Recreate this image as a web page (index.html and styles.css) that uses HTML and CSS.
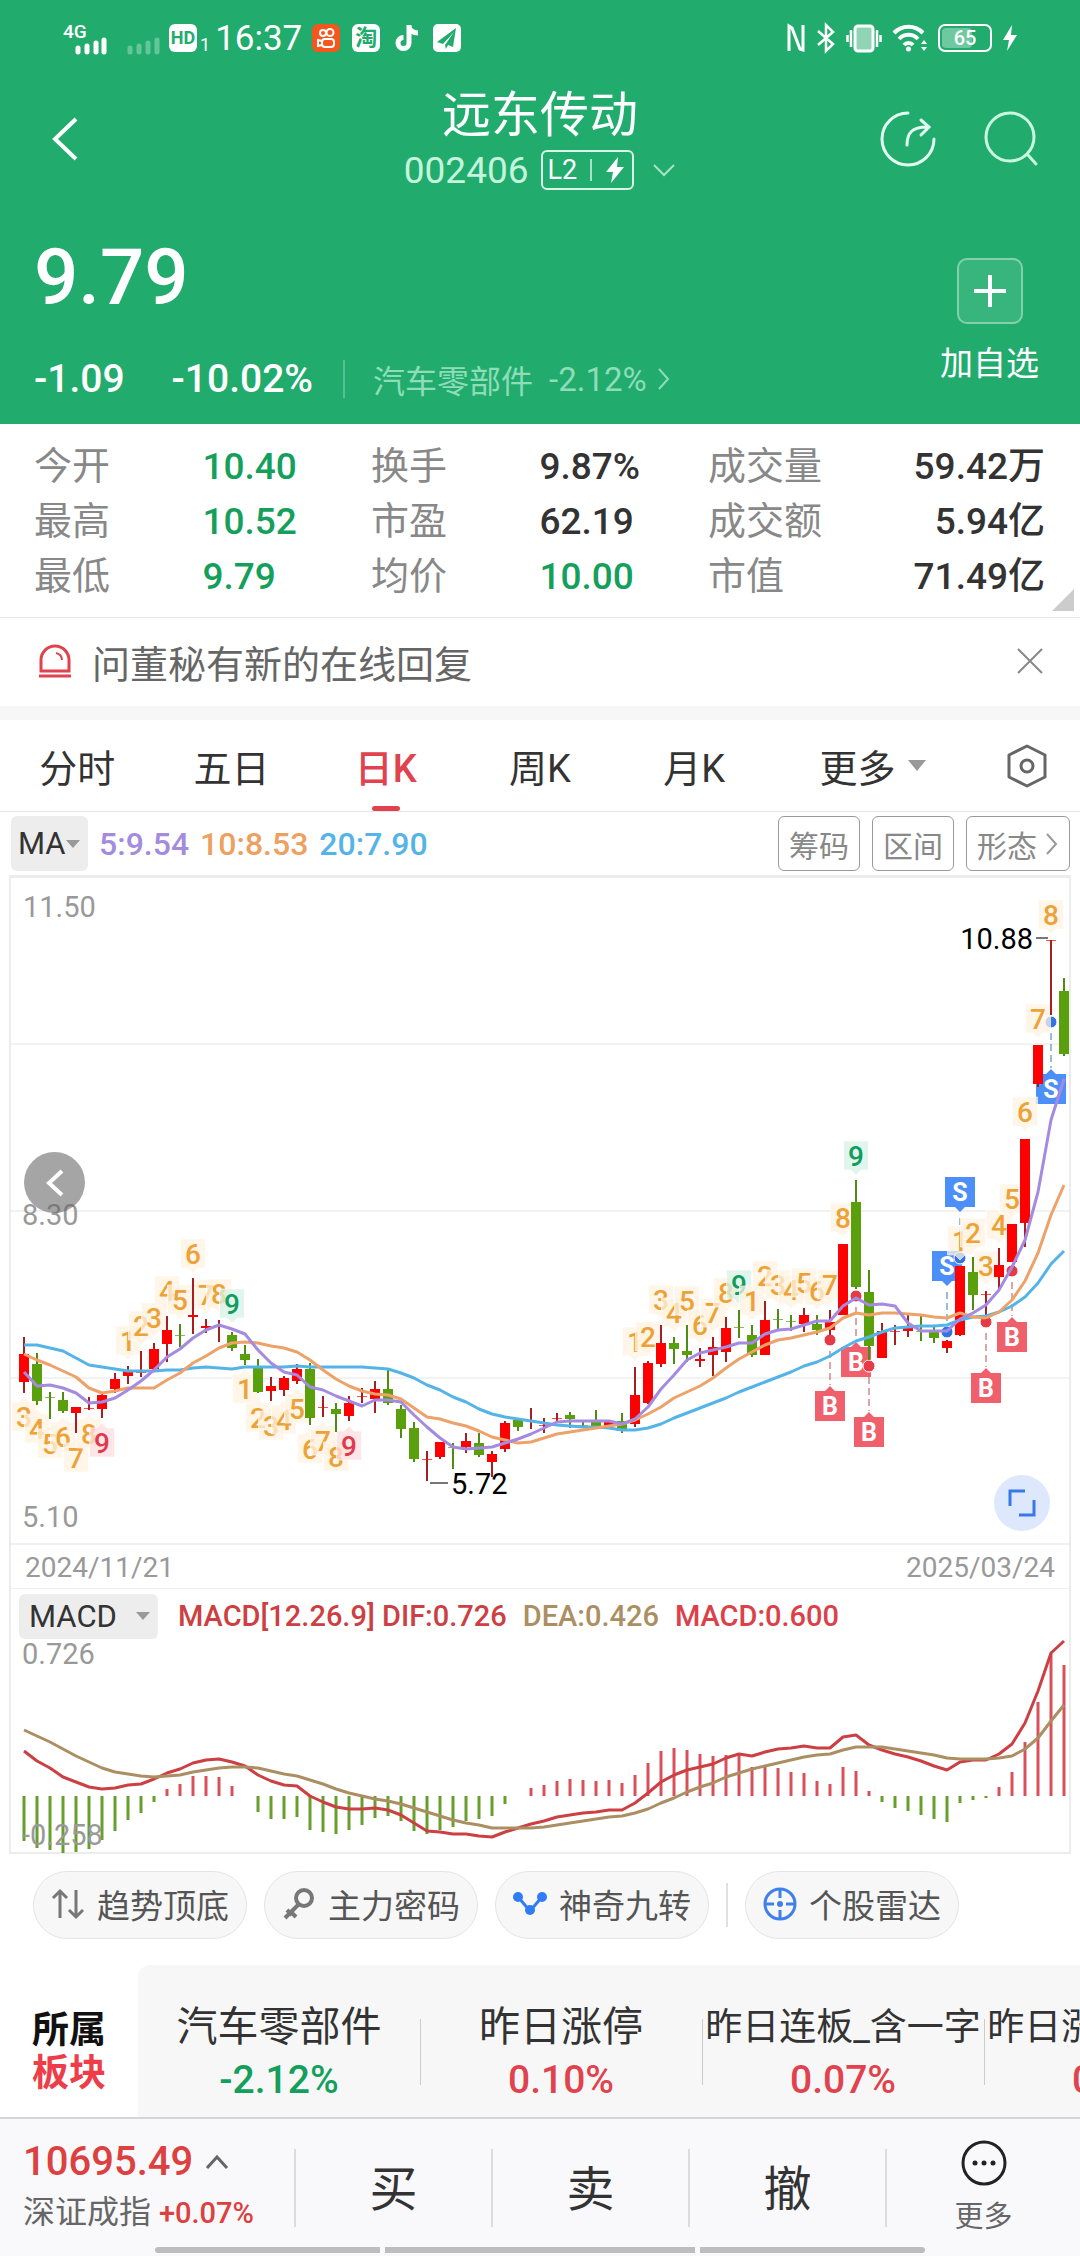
FILE: index.html
```html
<!DOCTYPE html>
<html lang="zh-CN">
<head>
    <meta charset="UTF-8">
    <meta name="viewport" content="width=device-width, initial-scale=1.0">
    <title>远东传动 002406</title>
    <link rel="stylesheet" href="styles.css">
</head>
<body>
    <header class="header">
        <div class="status-bar">
            <div class="status-left">
                <span class="net">4G</span>
                <svg class="signal" width="32" height="32" viewBox="0 0 32 32">
                    <path d="M3 30v-4M12 30v-6M21 30v-9M29 30V18" stroke="#fff" stroke-width="5" stroke-linecap="round"/>
                </svg>
                <svg class="signal-off" width="34" height="32" viewBox="0 0 34 32">
                    <path d="M3 30v-4M12 30v-6M21 30v-9M30 30V18" stroke="#fff" stroke-width="5" stroke-linecap="round"/>
                </svg>
                <span class="hd">HD</span><span class="sim">1</span>
                <span class="time">16:37</span>
                <svg class="app" width="28" height="28" viewBox="0 0 28 28">
                    <rect width="28" height="28" rx="6" fill="#f4561e"/>
                    <g fill="none" stroke="#fff" stroke-width="2"><circle cx="11" cy="9" r="3"/><circle cx="18" cy="8.500" r="3.500"/><rect x="10" y="15" width="12" height="8" rx="3"/><path d="M10 17l-4-1v6l4-1"/></g>
                </svg>
                <span class="tao">淘</span>
                <svg class="app" width="26" height="30" viewBox="0 0 26 30">
                    <path d="M14 2v18a5.500 5.500 0 1 1-5.500-5.500M14 3c0 4 4 7 9 7" fill="none" stroke="#fff" stroke-width="5"/>
                </svg>
                <svg class="app" width="28" height="28" viewBox="0 0 28 28">
                    <rect width="28" height="28" rx="5" fill="#fff"/>
                    <path d="M23 4L4 18l6 2L21 8 12 21l1 4 2-4 5 2z" fill="#21ac6e"/>
                </svg>
            </div>
            <div class="status-right">
                <svg width="20" height="30" viewBox="0 0 20 30"><path d="M3 28V3l3 2 8 21 3 1V2" fill="none" stroke="#fff" stroke-width="3"/></svg>
                <svg width="20" height="30" viewBox="0 0 20 30"><path d="M2 8l15 13-7 7V2l7 7L2 22" fill="none" stroke="#fff" stroke-width="2.500"/></svg>
                <svg width="36" height="30" viewBox="0 0 36 30">
                    <rect x="9" y="3" width="18" height="25" rx="3" fill="#8fd5b5" stroke="#fff" stroke-width="3"/>
                    <path d="M5 7v17M1.500 12v7M31 7v17M34.500 12v7" stroke="#fff" stroke-width="2.500"/>
                </svg>
                <svg width="36" height="30" viewBox="0 0 36 30">
                    <g fill="none" stroke="#fff" stroke-width="4"><path d="M2 10a20 20 0 0 1 29 0"/><path d="M7 16a13 13 0 0 1 19 0"/><path d="M12 22a6 6 0 0 1 9 0"/></g>
                    <circle cx="16.500" cy="26" r="2.500" fill="#fff"/><path d="M29 21l3-4 3 4zM29 24l3 4 3-4z" fill="#fff"/>
                </svg>
                <span class="battery"><span class="battery-level"></span><span class="battery-text">65</span></span>
                <svg width="16" height="28" viewBox="0 0 16 28"><path d="M10 1L1 16h6l-2 11L15 11H9z" fill="#fff"/></svg>
            </div>
        </div>

        <nav class="nav">
            <button class="icon-btn back" aria-label="返回">
                <svg width="28" height="46" viewBox="0 0 28 46"><path d="M25 3L4 23l21 20" fill="none" stroke="#fff" stroke-width="4"/></svg>
            </button>
            <div class="title">
                <h1>远东传动</h1>
                <div class="code-row">
                    <span class="code">002406</span>
                    <span class="level">L2<i></i>
                        <svg width="20" height="28" viewBox="0 0 20 28"><path d="M13 1L1 16h7l-2 11L19 11h-7z" fill="#fff"/></svg>
                    </span>
                    <svg class="chevron" width="24" height="14" viewBox="0 0 24 14"><path d="M2 2l10 10L22 2" fill="none" stroke="#a6e3c8" stroke-width="2"/></svg>
                </div>
            </div>
            <div class="nav-right">
                <button class="icon-btn" aria-label="分享">
                    <svg width="58" height="58" viewBox="0 0 58 58"><g fill="none" stroke="#e3fff2" stroke-width="3" stroke-linecap="round"><path d="M29 3a26 26 0 1 0 26 26"/><path d="M28 35c0-12 5-18 20-18M42 10l8 7-8 8"/></g></svg>
                </button>
                <button class="icon-btn" aria-label="搜索">
                    <svg width="58" height="58" viewBox="0 0 58 58"><g fill="none" stroke="#c9f7e0" stroke-width="3" stroke-linecap="round"><circle cx="28" cy="27" r="24"/><path d="M46 45l8 9"/></g></svg>
                </button>
            </div>
        </nav>

        <div class="quote">
            <div class="quote-main">
                <div class="price">9.79</div>
                <div class="change">
                    <span>-1.09</span>
                    <span class="percent">-10.02%</span>
                    <a class="industry" href="#">汽车零部件 <b>-2.12%</b>
                        <svg width="14" height="24" viewBox="0 0 14 24"><path d="M2 2l9 10-9 10" fill="none" stroke="#8fdcb8" stroke-width="2"/></svg>
                    </a>
                </div>
            </div>
            <button class="add">
                <span class="add-box"><svg width="36" height="36" viewBox="0 0 36 36"><path d="M18 2v32M2 18h32" stroke="#fff" stroke-width="4"/></svg></span>
                加自选
            </button>
        </div>
    </header>

    <dl class="stats">
        <dt>今开</dt><dd class="down">10.40</dd><dt>换手</dt><dd>9.87%</dd><dt>成交量</dt><dd class="last">59.42万</dd>
        <dt>最高</dt><dd class="down">10.52</dd><dt>市盈</dt><dd>62.19</dd><dt>成交额</dt><dd class="last">5.94亿</dd>
        <dt>最低</dt><dd class="down">9.79</dd><dt>均价</dt><dd class="down">10.00</dd><dt>市值</dt><dd class="last">71.49亿</dd>
    </dl>

    <div class="notice">
        <svg width="34" height="34" viewBox="0 0 34 34"><g fill="none" stroke="#e0434e" stroke-width="3"><path d="M3 27V16a14 14 0 0 1 28 0v11zM1 32h32"/><path d="M18 9c4 1 6 4 6 7" stroke-width="2"/></g></svg>
        <span>问董秘有新的在线回复</span>
        <button class="icon-btn close" aria-label="关闭">
            <svg width="26" height="26" viewBox="0 0 26 26"><path d="M1 1l24 24M25 1L1 25" stroke="#888" stroke-width="2"/></svg>
        </button>
    </div>

    <div class="tabs">
        <button class="tab">分时</button>
        <button class="tab">五日</button>
        <button class="tab active">日K</button>
        <button class="tab">周K</button>
        <button class="tab">月K</button>
        <button class="tab tab-more" aria-haspopup="true">更多<i class="caret"></i></button>
        <button class="tab tab-set" aria-label="设置">
            <svg width="42" height="44" viewBox="0 0 42 44"><g fill="none" stroke="#666" stroke-width="3"><path d="M21 2l18 9v22l-18 9-18-9V11z" stroke-linejoin="round"/><circle cx="21" cy="22" r="6"/></g></svg>
        </button>
    </div>

    <div class="ma-bar">
        <label class="picker picker-ma">
            <select aria-label="主图指标"><option>MA</option><option>BOLL</option></select>
            <i class="caret"></i>
        </label>
        <span class="ma5">5:9.54</span>
        <span class="ma10">10:8.53</span>
        <span class="ma20">20:7.90</span>
        <div class="ma-tools">
            <button>筹码</button>
            <button>区间</button>
            <button>形态<svg width="14" height="24" viewBox="0 0 14 24"><path d="M2 2l9 10-9 10" fill="none" stroke="#999" stroke-width="2"/></svg></button>
        </div>
    </div>

    <main class="chart">
        <div class="kline">
            <svg id="kline" viewBox="11 3 1058 665"></svg>
            <button class="prev" aria-label="向前">
                <svg width="20" height="30" viewBox="0 0 20 30"><path d="M17 3L4 15l13 12" fill="none" stroke="#fff" stroke-width="4"/></svg>
            </button>
            <button class="expand" aria-label="全屏">
                <svg width="28" height="28" viewBox="0 0 28 28"><path d="M2 17V2h15M26 11v15H11" fill="none" stroke="#3a78e8" stroke-width="3"/></svg>
            </button>
        </div>
        <div class="dates"><span>2024/11/21</span><span>2025/03/24</span></div>
        <div class="macd-bar">
            <label class="picker picker-macd">
                <select aria-label="副图指标"><option>MACD</option><option>KDJ</option></select>
                <i class="caret"></i>
            </label>
            <span class="dif">MACD[12.26.9] DIF:0.726</span>
            <span class="dea">DEA:0.426</span>
            <span class="macd">MACD:0.600</span>
        </div>
        <svg id="macd" viewBox="11 52 1058 212"></svg>
    </main>

    <div class="chips">
        <button class="chip">
            <svg width="34" height="34" viewBox="0 0 34 34"><path d="M9 31V4M2 11l7-7 7 7M25 3v27M18 23l7 7 7-7" fill="none" stroke="#777" stroke-width="3"/></svg>
            趋势顶底
        </button>
        <button class="chip">
            <svg width="34" height="34" viewBox="0 0 34 34"><g fill="none" stroke="#777" stroke-width="4"><circle cx="22" cy="11" r="8"/><path d="M17 17L3 31M9 25l5 5M5 23l5 5"/></g></svg>
            主力密码
        </button>
        <button class="chip">
            <svg width="34" height="34" viewBox="0 0 34 34"><path d="M5 10l12 14L29 10" fill="none" stroke="#2f7cf6" stroke-width="3"/><g fill="#2f7cf6"><circle cx="5" cy="10" r="5"/><circle cx="29" cy="10" r="5"/><circle cx="17" cy="23" r="5"/></g></svg>
            神奇九转
        </button>
        <i class="chip-line"></i>
        <button class="chip">
            <svg width="34" height="34" viewBox="0 0 34 34"><g fill="none" stroke="#3f80ea" stroke-width="3"><circle cx="17" cy="17" r="15"/><path d="M17 2v9M17 23v9M2 17h9M23 17h9"/></g><circle cx="17" cy="17" r="3" fill="#3f80ea"/></svg>
            个股雷达
        </button>
    </div>

    <section class="sectors">
        <h2>所属<em>板块</em></h2>
        <div class="sector-list">
            <a class="sector" href="#">汽车零部件<b class="down">-2.12%</b></a>
            <a class="sector" href="#">昨日涨停<b>0.10%</b></a>
            <a class="sector sector-long" href="#">昨日连板_含一字<b>0.07%</b></a>
            <a class="sector sector-long" href="#">昨日涨停_含一字<b>0.07%</b></a>
        </div>
    </section>

    <footer class="footer">
        <div class="trade">
            <button class="index">
                <span class="index-value">10695.49
                    <svg width="24" height="16" viewBox="0 0 24 16"><path d="M2 14L12 3l10 11" fill="none" stroke="#666" stroke-width="3"/></svg>
                </span>
                <span class="index-name">深证成指 <b>+0.07%</b></span>
            </button>
            <button class="action">买</button>
            <button class="action">卖</button>
            <button class="action">撤</button>
            <button class="action more">
                <svg width="48" height="48" viewBox="0 0 48 48"><circle cx="24" cy="24" r="21" fill="none" stroke="#222" stroke-width="3"/><g fill="#222"><circle cx="15" cy="24" r="2.500"/><circle cx="24" cy="24" r="2.500"/><circle cx="33" cy="24" r="2.500"/></g></svg>
                更多
            </button>
        </div>
        <div class="gesture"><i></i><i></i><i></i></div>
    </footer>

    <script src="chart.js"></script>
</body>
</html>
```

FILE: styles.css
```css
:root {
    --green: #21ac6e;
    --down: #14a05c;
    --up: #e0434e;
    --text: #333;
    --muted: #888;
    --line: #ececec;
    --font: Roboto, "Noto Sans CJK SC", sans-serif;
}

* {
    box-sizing: border-box;
}

body {
    margin: 0;
    font-family: var(--font);
    color: var(--text);
    background: #fff;
}

button, select {
    font-family: inherit;
    color: inherit;
    border: none;
    background: none;
    padding: 0;
    cursor: pointer;
}

a {
    color: inherit;
    text-decoration: none;
}

svg {
    display: block;
    flex: none;
    overflow: visible;
}

.icon-btn {
    display: flex;
}

.caret {
    border: 9px solid transparent;
    border-top: 11px solid #999;
    border-bottom: none;
}

/* header */
.header {
    background: var(--green);
    color: #fff;
}

.status-bar {
    display: flex;
    justify-content: space-between;
    height: 76px;
    padding: 0 62px 0 63px;
}

.status-left, .status-right {
    display: flex;
    align-items: center;
}

.net {
    width: 12px;
    margin-bottom: 14px;
    font-size: 19px;
    font-weight: 500;
    white-space: nowrap;
}

.signal-off {
    margin-left: 20px;
    opacity: 0.3;
}

.hd {
    margin-left: 8px;
    width: 28px;
    border-radius: 6px;
    background: #fff;
    color: var(--green);
    font-size: 18px;
    font-weight: 700;
    line-height: 28px;
    text-align: center;
}

.sim {
    margin: 14px 5px 0 3px;
    font-size: 18px;
    line-height: 18px;
}

.time {
    margin-right: 10px;
    font-size: 35px;
}

.app {
    margin-right: 12px;
}

.tao {
    width: 28px;
    margin-right: 15px;
    border-radius: 6px;
    background: #fff;
    color: var(--green);
    font-size: 22px;
    font-weight: 700;
    line-height: 28px;
    text-align: center;
}

.status-right {
    gap: 10px;
}

.battery {
    position: relative;
    width: 54px;
    height: 28px;
    border: 2px solid #fff;
    border-radius: 7px;
    text-align: center;
    line-height: 24px;
    font-size: 20px;
    font-weight: 500;
}

.battery-level {
    position: absolute;
    inset: 2px 18px 2px 2px;
    border-radius: 4px;
    background: rgba(255, 255, 255, 0.35);
}

.battery-text {
    position: relative;
}

.nav {
    display: grid;
    grid-template-columns: 1fr auto 1fr;
    align-items: center;
    padding: 12px 40px 0;
}

.back {
    padding-left: 11px;
}

.title {
    text-align: center;
}

.title h1 {
    margin: 0;
    font-size: 49px;
    font-weight: 400;
    line-height: 56px;
}

.code-row {
    display: flex;
    align-items: center;
    justify-content: center;
    gap: 12px;
    margin-top: 6px;
    height: 40px;
}

.code {
    font-size: 37px;
    color: #c4f5dc;
}

.level {
    display: flex;
    align-items: center;
    gap: 13px;
    height: 40px;
    padding: 0 7px 0 5px;
    border: 2px solid #d8f5e7;
    border-radius: 6px;
    font-size: 27px;
}

.level i {
    width: 2px;
    height: 22px;
    background: #a6e3c8;
}

.chevron {
    margin-left: 6px;
}

.nav-right {
    display: flex;
    justify-content: flex-end;
    gap: 45px;
}

.quote {
    display: flex;
    justify-content: space-between;
    align-items: flex-end;
    padding: 43px 41px 23px 34px;
}

.price {
    font-size: 78px;
    font-weight: 500;
    line-height: 90px;
    margin-bottom: 34px;
}

.change {
    display: flex;
    align-items: center;
    height: 44px;
    font-size: 39px;
    font-weight: 500;
}

.percent {
    margin-left: 47px;
}

.industry {
    display: flex;
    align-items: center;
    gap: 16px;
    margin-left: 30px;
    padding-left: 28px;
    height: 38px;
    border-left: 2px solid #55c293;
    color: #8fdcb8;
    font-size: 32px;
    font-weight: 400;
}

.industry b {
    font-size: 33px;
    font-weight: 400;
}

.industry svg {
    margin-left: -6px;
}

.add {
    display: flex;
    flex-direction: column;
    align-items: center;
    gap: 18px;
    margin-bottom: 15px;
    font-size: 33px;
    line-height: 44px;
}

.add-box {
    display: flex;
    align-items: center;
    justify-content: center;
    width: 66px;
    height: 66px;
    border: 2px solid #85d0ac;
    border-radius: 10px;
    background: #38b47d;
}

/* quote figures */
.stats {
    position: relative;
    display: grid;
    grid-template-columns: repeat(6, 1fr);
    margin: 0;
    padding: 15px 35px 13px 34px;
    border-bottom: 1px solid #e6e6e6;
    font-size: 38px;
    line-height: 55px;
}

.stats::after {
    content: "";
    position: absolute;
    right: 6px;
    bottom: 6px;
    border-left: 22px solid transparent;
    border-bottom: 22px solid #ccc;
}

.stats dt {
    color: var(--muted);
    white-space: nowrap;
}

.stats dd {
    margin: 0;
    font-size: 37px;
    font-weight: 500;
    white-space: nowrap;
}

.stats dd.last {
    display: flex;
    justify-content: flex-end;
}

.down {
    color: var(--down);
}

.notice {
    display: flex;
    align-items: center;
    gap: 20px;
    height: 102px;
    padding: 0 37px 2px 38px;
    border-bottom: 14px solid #f7f7f7;
    font-size: 38px;
    color: #666;
}

.close {
    margin-left: auto;
}

/* period tabs */
.tabs {
    display: flex;
    height: 92px;
    border-bottom: 1px solid #e6e6e6;
}

.tab {
    position: relative;
    display: flex;
    align-items: center;
    justify-content: center;
    flex: 154 0 0;
    font-size: 38px;
}

.tab.active {
    color: var(--up);
    font-weight: 500;
}

.tab.active::after {
    content: "";
    position: absolute;
    left: 50%;
    bottom: 0;
    width: 28px;
    height: 5px;
    margin-left: -14px;
    border-radius: 3px;
    background: var(--up);
}

.tab-more {
    flex-grow: 202;
    gap: 12px;
}

.tab-set {
    flex-grow: 106;
}

/* indicator row */
.ma-bar {
    display: flex;
    align-items: center;
    gap: 11px;
    height: 63px;
    padding: 0 10px 0 11px;
    font-size: 32px;
    font-weight: 500;
}

.picker {
    position: relative;
    display: flex;
    align-items: center;
    border-radius: 6px;
    background: #ededed;
}

.picker select {
    appearance: none;
    width: 100%;
    height: 100%;
    padding-left: 7px;
    font-size: 31px;
    outline: none;
}

.picker .caret {
    position: absolute;
    right: 8px;
    border-width: 8px 7px 0;
    pointer-events: none;
}

.picker-ma {
    width: 77px;
    height: 55px;
}

.ma5 {
    color: #a58be0;
}

.ma10 {
    color: #eda05f;
}

.ma20 {
    color: #54b4e8;
}

.ma-tools {
    display: flex;
    gap: 12px;
    margin-left: auto;
}

.ma-tools button {
    display: flex;
    align-items: center;
    gap: 8px;
    height: 55px;
    padding: 0 10px;
    border: 1px solid #999;
    border-radius: 6px;
    color: var(--muted);
    font-size: 30px;
}

/* chart */
.chart {
    margin: 0 9px;
    border: 2px solid var(--line);
    border-top-width: 3px;
}

.chart > svg, .kline > svg {
    width: 100%;
}

.kline {
    position: relative;
}

.prev, .expand {
    position: absolute;
    display: flex;
    align-items: center;
    justify-content: center;
    border-radius: 50%;
}

.prev {
    left: 13px;
    top: 274px;
    width: 61px;
    height: 61px;
    background: rgba(100, 100, 100, 0.58);
}

.expand {
    right: 19px;
    bottom: 12px;
    width: 56px;
    height: 56px;
    background: #dde8fd;
}

.dates {
    display: flex;
    align-items: center;
    justify-content: space-between;
    height: 46px;
    padding: 2px 14px 0;
    border: 2px solid #f0f0f0;
    border-width: 2px 0 1px;
    color: #999;
    font-size: 28px;
}

.macd-bar {
    display: flex;
    align-items: center;
    gap: 16px;
    height: 51px;
    padding: 3px 8px 0;
    font-size: 29px;
    font-weight: 500;
}

.picker-macd {
    width: 139px;
    height: 45px;
    margin-right: 4px;
}

.picker-macd select {
    padding-left: 10px;
}

.dif {
    color: #cc3f42;
}

.dea {
    color: #ab8f62;
}

.macd {
    color: #dc4049;
}

.grid-line {
    stroke: #f2f2f2;
    stroke-width: 2;
}

.axis {
    fill: #999;
    font-size: 29px;
}

.peak {
    fill: #000;
    font-size: 29px;
}

.tag {
    font-size: 28px;
    font-weight: 500;
    text-anchor: middle;
}

.marker {
    fill: #fff;
    font-size: 25px;
    font-weight: 700;
    text-anchor: middle;
}

.curve {
    fill: none;
    stroke-width: 3;
    stroke-linejoin: round;
}

/* shortcuts */
.chips {
    display: flex;
    gap: 17px;
    padding: 17px 33px 26px;
}

.chip {
    display: flex;
    align-items: center;
    justify-content: center;
    gap: 12px;
    width: 214px;
    height: 68px;
    padding-bottom: 2px;
    border: 1px solid #e4e4e4;
    border-radius: 34px;
    background: #f7f7f7;
    color: #555;
    font-size: 33px;
    white-space: nowrap;
}

.chip-line {
    align-self: center;
    width: 2px;
    height: 44px;
    background: #e0e0e0;
}

/* sectors */
.sectors {
    display: flex;
    height: 152px;
    overflow: hidden;
}

.sectors h2 {
    flex: none;
    width: 138px;
    margin: 0;
    padding: 44px 0 0 32px;
    color: #111;
    font-size: 37px;
    line-height: 43px;
}

.sectors em {
    display: block;
    color: #ee3d48;
    font-style: normal;
}

.sector-list {
    display: flex;
    align-items: center;
    padding-top: 26px;
    border-radius: 12px 0 0 0;
    background: #f7f7f7;
}

.sector {
    position: relative;
    flex: none;
    width: 282px;
    text-align: center;
    font-size: 41px;
    line-height: 53px;
    white-space: nowrap;
}

.sector + .sector::before {
    content: "";
    position: absolute;
    left: 0;
    top: 18px;
    width: 1px;
    height: 66px;
    background: #ccc;
}

.sector-long {
    font-size: 37px;
}

.sector b {
    display: block;
    color: var(--up);
    font-size: 39px;
    font-weight: 500;
}

.sector b.down {
    color: var(--down);
}

/* footer */
.footer {
    border-top: 2px solid #d4d4d8;
    background: #f9f9fc;
}

.trade {
    display: grid;
    grid-template-columns: 294fr 197fr 197fr 197fr 195fr;
    align-items: center;
    height: 128px;
    padding-top: 9px;
}

.index {
    padding-left: 23px;
    text-align: left;
}

.index-value {
    display: flex;
    align-items: center;
    gap: 12px;
    color: #dd4040;
    font-size: 40px;
    font-weight: 500;
    line-height: 50px;
}

.index-name {
    display: block;
    color: #666;
    font-size: 32px;
    line-height: 50px;
    white-space: nowrap;
}

.index-name b {
    color: #dd4040;
    font-size: 29px;
    font-weight: 500;
}

.action {
    display: flex;
    align-items: center;
    justify-content: center;
    height: 78px;
    padding-bottom: 6px;
    border-left: 2px solid #dcdce0;
    font-size: 48px;
}

.more {
    flex-direction: column;
    gap: 6px;
    padding: 4px 0 0;
    color: #666;
    font-size: 29px;
    line-height: 48px;
}

.gesture {
    display: flex;
    justify-content: center;
    gap: 5px;
    height: 9px;
}

.gesture i {
    width: 225px;
    height: 6px;
    background: #bdbdbf;
}

.gesture i:nth-child(2) {
    width: 310px;
}

.gesture i:first-child {
    border-radius: 3px 0 0 3px;
}

.gesture i:last-child {
    border-radius: 0 3px 3px 0;
}
```

FILE: chart.js
```js
var NS = 'http://www.w3.org/2000/svg';
var STEP = 13;
var START = 24;

// [high, body top, body bottom, low, rising]
var candles = [
    [462,479,507,518,1],[478,489,526,530,0],[517,522,523,544,0],[517,525,536,538,0],[532,532,538,558,1],
    [522,533,534,535,1],[518,520,534,543,1],[498,504,514,518,1],[491,495,501,509,1],[476,497,498,502,1],
    [468,474,494,496,1],[441,455,469,487,1],[449,460,461,472,0],[403,440,442,459,1],[444,451,453,458,1],
    [445,451,452,467,1],[457,460,473,476,0],[470,479,485,490,0],[484,492,517,518,0],[502,511,516,526,1],
    [501,503,515,521,1],[489,494,506,509,1],[488,494,543,550,0],[521,532,533,542,1],[528,534,539,557,0],
    [521,528,541,546,1],[513,521,522,528,1],[506,514,524,538,1],[495,514,528,530,0],[530,534,554,563,0],
    [547,553,584,587,0],[576,584,585,606,1],[567,567,582,584,1],[568,572,573,594,0],[558,566,572,578,1],
    [558,568,580,582,0],[576,579,587,602,1],[546,548,574,577,1],[543,545,552,556,0],[533,546,547,554,1],
    [543,550,551,558,1],[538,543,544,547,1],[537,540,544,553,0],[547,550,551,552,0],[535,545,551,552,0],
    [545,547,551,552,1],[538,546,556,558,0],[492,520,549,552,1],[486,488,528,529,1],[450,468,489,492,1],
    [462,468,474,489,0],[450,476,480,487,0],[473,484,486,492,1],[462,472,480,501,1],[442,453,477,487,1],
    [435,452,453,463,0],[450,460,480,482,0],[426,445,480,480,1],[434,444,445,454,0],[440,446,447,456,0],
    [433,440,449,457,1],[440,449,455,460,0],[435,447,455,460,1],[369,369,440,440,1],[305,327,412,414,0],
    [395,417,471,485,0],[448,456,483,483,1],[450,456,457,470,1],[440,452,456,462,1],[441,456,457,466,0],
    [452,457,463,468,0],[465,466,473,478,1],[391,391,460,461,1],[382,397,420,435,0],[416,419,420,445,1],
    [373,390,402,416,1],[349,349,387,387,1],[264,264,348,372,1],[170,170,209,212,1],[65,65,66,140,1],
    [103,116,179,181,0]
];

var ma5 = [497,511,510,513,518,528,527,523,515,506,495,482,474,463,455,450,454,459,475,488,497,500,512,515,521,526,531,525,525,527,540,552,563,572,574,573,572,568,564,559,553,547,546,546,546,546,549,544,532,514,500,485,478,475,472,468,468,459,455,454,450,446,446,431,423,430,429,431,448,456,456,456,444,438,430,415,392,365,317,245,204];
var ma10 = [479,485,490,496,502,513,518,516,513,513,513,505,498,488,481,473,468,467,468,471,473,477,485,495,504,511,516,519,520,524,533,542,544,548,551,556,562,565,568,567,563,559,557,555,553,551,549,545,539,532,523,517,511,503,493,484,477,470,465,463,460,457,453,443,438,440,438,438,439,440,442,443,438,442,443,437,425,406,378,340,310];
var ma20 = [470,470,473,476,483,490,492,494,496,496,496,495,495,493,492,493,494,492,492,492,492,491,492,492,492,492,492,493,494,498,503,510,515,522,527,534,539,542,544,546,548,550,551,552,552,553,555,555,553,549,543,538,533,528,523,517,512,507,502,497,491,487,481,473,466,462,457,453,452,451,451,450,445,442,441,437,431,422,408,389,376];

// [candle, digit, box top, pointer direction]
var tags = [
    [0,3,527,'up'],[1,4,539,'up'],[2,5,554,'up'],[3,6,547,'up'],[4,7,568,'up'],[5,8,544,'up'],[6,9,553,'up'],
    [8,1,451],[9,2,436],[10,3,428],[11,4,401],[12,5,410],[13,6,364],[14,7,405],[15,8,404],[16,9,414],
    [17,1,499,'up'],[18,2,528,'up'],[19,3,536,'up'],[20,4,530,'up'],[21,5,519,'up'],[22,6,559,'up'],[23,7,551,'up'],[24,8,567,'up'],[25,9,556,'up'],
    [47,1,452],[48,2,447],[49,3,410],[50,4,423],[51,5,411],[52,6,435],[53,7,423],[54,8,403],[55,9,395],
    [56,1,411],[57,2,386],[58,3,395],[59,4,400],[60,5,393],[61,6,401],[62,7,395],[63,8,328],[64,9,266],
    [72,1,351],[73,2,343],[74,3,376],[75,4,335],[76,5,309],[77,6,222],[78,7,129],[79,8,25]
];

// [candle, side, dot y, box top]
var trades = [
    [62,'B',465,516],[64,'B',421,472],[65,'B',491,542],[74,'B',447,498],[76,'B',396,447],
    [79,'S',147,199],[72,'S',383,302],[71,'S',457,376]
];

var dif = [163,173,180,189,194,199,201,200,197,196,191,185,181,175,172,171,174,178,187,193,197,198,208,214,219,221,221,220,222,227,235,243,244,246,246,248,249,244,240,236,233,229,227,225,224,222,222,215,205,194,187,182,179,176,170,166,168,164,161,160,158,160,160,149,147,157,162,166,169,173,178,182,174,172,172,166,156,135,103,65,53];
var dea = [142,148,154,161,168,174,180,184,186,188,189,188,187,184,182,180,179,179,180,183,186,188,192,196,201,205,208,211,213,216,220,224,228,232,235,237,240,240,240,240,239,237,235,233,231,229,228,225,221,215,210,204,199,195,189,185,181,178,175,172,169,167,166,162,159,159,159,161,163,165,167,170,171,171,171,170,168,161,150,133,117];
var bars = [253,260,262,265,264,261,252,243,232,225,214,201,196,188,188,189,198,208,224,231,231,229,242,244,246,242,237,230,228,233,243,246,242,239,233,231,228,216,208,200,197,193,191,192,193,192,195,187,175,163,160,162,166,168,167,165,179,178,180,184,185,193,196,179,183,203,214,220,223,227,231,234,215,212,210,199,184,154,114,66,77];
var ZERO = 208;

function x(i) {
    return START + i * STEP;
}

function add(parent, name, attrs, text) {
    var el = document.createElementNS(NS, name);
    for (var key in attrs) {
        el.setAttribute(key, attrs[key]);
    }
    if (text !== undefined) {
        el.textContent = text;
    }
    parent.appendChild(el);
    return el;
}

function curve(svg, values, color) {
    var points = values.map(function (y, i) {
        return x(i) + ',' + y;
    });
    add(svg, 'polyline', {points: points.join(' '), stroke: color, 'class': 'curve'});
}

// square label with a small pointer at its top or bottom edge
function bubble(cx, top, w, h, up) {
    var l = cx - w / 2, r = cx + w / 2, b = top + h;
    if (up) {
        return 'M' + l + ' ' + top + 'H' + (cx - 5) + 'L' + cx + ' ' + (top - 5) + 'L' + (cx + 5) + ' ' + top + 'H' + r + 'V' + b + 'H' + l + 'Z';
    }
    return 'M' + l + ' ' + top + 'H' + r + 'V' + b + 'H' + (cx + 5) + 'L' + cx + ' ' + (b + 5) + 'L' + (cx - 5) + ' ' + b + 'H' + l + 'Z';
}

function drawTrades(svg) {
    trades.forEach(function (t) {
        var cx = x(t[0]), up = t[3] > t[2], buy = t[1] === 'B';
        var color = buy ? '#f0606c' : '#4d8ff8';
        add(svg, 'path', {d: bubble(cx, t[3], 30, 30, up), fill: color});
        add(svg, 'text', {x: cx, y: t[3] + 24, 'class': 'marker'}, t[1]);
    });
    trades.forEach(function (t) {
        var cx = x(t[0]), up = t[3] > t[2], buy = t[1] === 'B';
        var color = buy ? '#e63b47' : '#3273e6';
        add(svg, 'line', {
            x1: cx, x2: cx, y1: up ? t[2] + 11 : t[2] - 11, y2: up ? t[3] - 6 : t[3] + 38,
            stroke: buy ? '#c04a55' : '#3b76b8', 'stroke-dasharray': '7 4'
        });
        add(svg, 'circle', {cx: cx, cy: t[2], r: 6, fill: color, stroke: '#fff'});
    });
}

function drawTags(svg) {
    tags.forEach(function (t) {
        var cx = x(t[0]), up = t[3] === 'up';
        var fill = '#fff2e2', color = '#eca236';
        if (t[1] === 9) {
            fill = up ? '#fddde0' : '#d5f2e4';
            color = up ? '#e0394a' : '#119c5f';
        }
        add(svg, 'path', {d: bubble(cx, t[2], 25, 29, up), fill: fill, 'fill-opacity': 0.75, stroke: '#fff', 'stroke-opacity': 0.6});
        add(svg, 'text', {x: cx, y: t[2] + 25, fill: color, 'class': 'tag'}, t[1]);
    });
}

function drawCandles(svg) {
    candles.forEach(function (c, i) {
        var flat = c[2] - c[1] <= 1;
        var fill = c[4] ? '#ff0000' : '#5a9f0c';
        add(svg, 'rect', {x: x(i) - 1, y: c[0], width: 2, height: c[3] - c[0], fill: c[4] ? '#a81f22' : '#4f8c14'});
        add(svg, 'rect', {x: x(i) - 5, y: c[1], width: 10, height: Math.max(c[2] - c[1], 1), fill: fill, 'fill-opacity': flat ? 0.7 : 1});
    });
}

function drawKline() {
    var svg = document.getElementById('kline');
    [169, 336, 503].forEach(function (y) {
        add(svg, 'line', {x1: 11, x2: 1069, y1: y, y2: y, 'class': 'grid-line'});
    });
    drawTrades(svg);
    drawTags(svg);
    drawCandles(svg);
    curve(svg, ma20, '#54b4e8');
    curve(svg, ma10, '#eda26a');
    curve(svg, ma5, '#a58be0');

    add(svg, 'text', {x: 23, y: 42, 'class': 'axis'}, '11.50');
    add(svg, 'text', {x: 22, y: 350, 'class': 'axis'}, '8.30');
    add(svg, 'text', {x: 22, y: 652, 'class': 'axis'}, '5.10');
    add(svg, 'path', {d: 'M430 608h18M1036 63h12', stroke: '#777', 'stroke-width': 2});
    add(svg, 'text', {x: 451, y: 619, 'class': 'peak'}, '5.72');
    add(svg, 'text', {x: 1033, y: 74, 'text-anchor': 'end', 'class': 'peak'}, '10.88');
}

function drawMacd() {
    var svg = document.getElementById('macd');
    bars.forEach(function (y, i) {
        if (y === ZERO) {
            return;
        }
        add(svg, 'line', {x1: x(i), x2: x(i), y1: ZERO, y2: y, stroke: y > ZERO ? '#679f2c' : '#d8505a', 'stroke-width': 3});
    });
    curve(svg, dif, '#cc3f42');
    curve(svg, dea, '#ab8f62');
    add(svg, 'text', {x: 22, y: 76, 'class': 'axis'}, '0.726');
    add(svg, 'text', {x: 22, y: 257, 'class': 'axis'}, '-0.258');
}

drawKline();
drawMacd();
```
